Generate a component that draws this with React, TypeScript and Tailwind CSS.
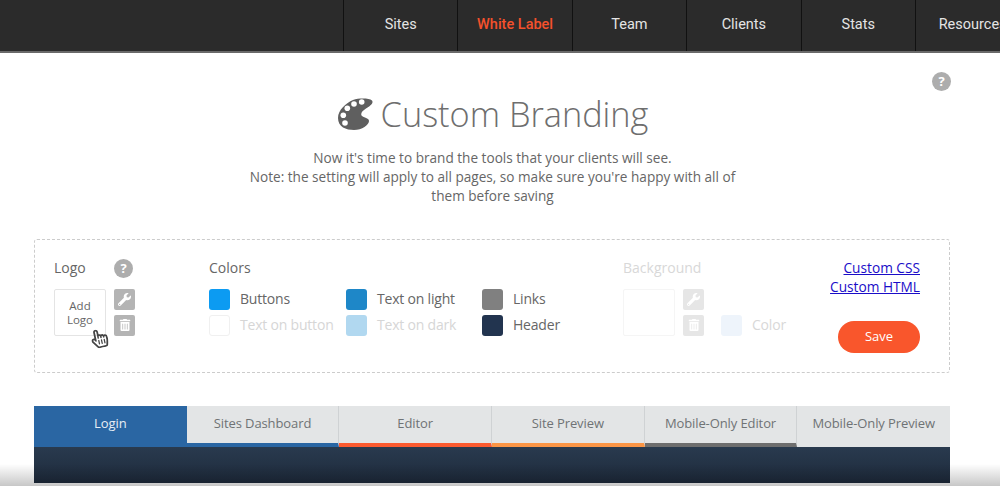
import { FaWrench, FaTrashAlt, FaRegHandPointer } from "react-icons/fa";

const body = "font-['Open_Sans',sans-serif]";

function Help({ className = "" }: { className?: string }) {
  return (
    <span className={`flex h-[19px] w-[19px] items-center justify-center rounded-full bg-[#adadad] text-[13px] font-bold leading-none text-white ${className}`}>?</span>
  );
}

function Tool({ children, faded }: { children: React.ReactNode; faded?: boolean }) {
  return (
    <span className={`flex h-[21px] w-[21px] items-center justify-center rounded-[2px] text-white ${faded ? "bg-[#e6e6e6]" : "bg-[#b4b4b4]"}`}>{children}</span>
  );
}

function Swatch({ color, label, faded }: { color: string; label: string; faded?: boolean }) {
  return (
    <div className="flex h-[21px] items-center gap-[10px]">
      <span className={`h-[21px] w-[21px] shrink-0 rounded-[3px] ${color}`} />
      <span className={`text-[14px] leading-none tracking-[-0.2px] ${faded ? "text-[#d6d6d6]" : "text-[#666]"}`}>{label}</span>
    </div>
  );
}

function Palette() {
  return (
    <svg width="35" height="33" viewBox="0 0 35 33" className="shrink-0">
      <path
        fill="#5f5f5f"
        d="M15 2C21 0 31 0 34 2.5C36 5 32 8 28 10.5C24 13 22 16 24 18C27 20 31 20 31 23C31 27 24 32 16 32C8 32 0 29 0 20C0 12 8 5 15 2Z"
      />
      <circle cx="23.7" cy="4" r="2.8" fill="#fff" />
      <circle cx="16" cy="6" r="2.8" fill="#fff" />
      <circle cx="9.3" cy="10.3" r="2.8" fill="#fff" />
      <circle cx="5.3" cy="17.3" r="2.8" fill="#fff" />
      <circle cx="7" cy="25" r="2.8" fill="#fff" />
    </svg>
  );
}

const nav = ["Sites", "White Label", "Team", "Clients", "Stats", "Resources"];
const tabs = [
  { label: "Login", line: "border-[#2a66a3]", active: true },
  { label: "Sites Dashboard", line: "border-[#2a66a3]" },
  { label: "Editor", line: "border-[#fb5a2f]" },
  { label: "Site Preview", line: "border-[#fb9545]" },
  { label: "Mobile-Only Editor", line: "border-[#6e6e6e]" },
  { label: "Mobile-Only Preview", line: "border-[#e3e5e6]", last: true },
];

export default function App() {
  return (
    <div className={`relative h-[486px] w-[1000px] overflow-hidden bg-white ${body}`}>
      <header className="flex h-[53px] overflow-hidden border-b-2 border-[#6a6a6a] bg-[#2b2b2b] pl-[343px] font-['Roboto',sans-serif] text-[14.5px]">
        {nav.map((n) => (
          <div key={n} className={`flex h-full w-[114.4px] shrink-0 items-center justify-center whitespace-nowrap border-l border-[#111] pb-[1px] ${n === "White Label" ? "font-medium text-[#f4512c]" : "text-[#e4e4e4]"}`}>
            {n}
          </div>
        ))}
      </header>

      <Help className="absolute left-[932px] top-[72px]" />

      <section className="flex flex-col items-center pr-[14px] pt-[36px]">
        <h1 className="flex h-[50px] items-center gap-[8px] text-[#6e6e6e]">
          <Palette />
          <span className="font-['Open_Sans',sans-serif] text-[34.3px] font-light leading-none">Custom Branding</span>
        </h1>
        <p className="mr-[1px] mt-[9px] w-[520px] text-center text-[13.6px] leading-[19.2px] text-[#666]">
          Now it's time to brand the tools that your clients will see.
          <br />
          Note: the setting will apply to all pages, so make sure you're happy with all of them before saving
        </p>
      </section>

      <section className="mx-[34px] mt-[33px] flex h-[134px] w-[916px] rounded-[3px] border border-dashed border-[#ccc] pl-[19px] pr-[29px] pt-[19px]">
        <div className="w-[155px]">
          <div className="flex h-[19px] items-center">
            <span className="w-[60px] text-[14px] leading-none text-[#666]">Logo</span>
            <Help />
          </div>
          <div className="relative mt-[11px] flex gap-[8px]">
            <div className="flex h-[47px] w-[52px] items-center justify-center rounded-[2px] border border-[#e4e4e4] pt-[1px] text-center text-[11.5px] leading-[14px] text-[#666]">
              Add<br />Logo
            </div>
            <div className="flex flex-col gap-[5px]">
              <Tool><FaWrench size={13} /></Tool>
              <Tool><FaTrashAlt size={12} /></Tool>
            </div>
            <FaRegHandPointer className="absolute left-[37px] top-[40px] h-[19px] w-[17px] rotate-[-12deg] text-[#444]" />
          </div>
        </div>

        <div className="w-[414px]">
          <div className="flex h-[19px] items-center text-[14px] leading-none text-[#666]">Colors</div>
          <div className="mt-[11px] flex">
            <div className="flex w-[137px] flex-col gap-[5px]">
              <Swatch color="bg-[#0c9bf2]" label="Buttons" />
              <Swatch color="border border-[#f0f0f0] bg-white" label="Text on button" faded />
            </div>
            <div className="flex w-[136px] flex-col gap-[5px]">
              <Swatch color="bg-[#1e87c8]" label="Text on light" />
              <Swatch color="bg-[#b1d8f0]" label="Text on dark" faded />
            </div>
            <div className="flex flex-col gap-[5px]">
              <Swatch color="bg-[#808080]" label="Links" />
              <Swatch color="bg-[#22344f]" label="Header" />
            </div>
          </div>
        </div>

        <div className="w-[200px]">
          <div className="flex h-[19px] items-center text-[14px] leading-none text-[#d8d8d8]">Background</div>
          <div className="mt-[11px] flex gap-[8px]">
            <div className="h-[47px] w-[52px] rounded-[2px] border border-[#f5f5f5]" />
            <div className="flex flex-col gap-[5px]">
              <Tool faded><FaWrench size={13} /></Tool>
              <Tool faded><FaTrashAlt size={12} /></Tool>
            </div>
            <div className="ml-[9px] mt-[26px] flex h-[21px] items-center gap-[10px]">
              <span className="h-[21px] w-[21px] rounded-[3px] bg-[#eef4fb]" />
              <span className="text-[14px] leading-none tracking-[-0.2px] text-[#d8d8d8]">Color</span>
            </div>
          </div>
        </div>

        <div className="-mt-[1px] flex flex-1 flex-col items-end">
          <a href="#" className="whitespace-nowrap text-[13.7px] leading-[19px] text-[#1a0dc8] underline">Custom CSS</a>
          <a href="#" className="whitespace-nowrap text-[13.7px] leading-[19px] text-[#1a0dc8] underline">Custom HTML</a>
          <button className="mt-[25px] h-[32px] w-[82px] rounded-full bg-[#f9562c] text-[13px] text-white">Save</button>
        </div>
      </section>

      <nav className="mx-[34px] mt-[33px] grid w-[916px] grid-cols-6">
        {tabs.map((t) => (
          <div key={t.label} className={`flex h-[41px] items-center justify-center border-b-[4px] text-[13px] tracking-[-0.1px] ${t.line} ${t.active ? "bg-[#2a66a3] text-[#e8eef5]" : t.last ? "bg-[#e3e5e6] text-[#6f7375]" : "border-r border-r-[#cfd2d4] bg-[#e3e5e6] text-[#6f7375]"}`}>
            {t.label}
          </div>
        ))}
      </nav>
      <div className="mx-[34px] h-[36px] w-[916px] bg-gradient-to-b from-[#293a4e] to-[#1e2b3c]" />

      <div className="pointer-events-none absolute inset-x-0 bottom-0 h-[22px] bg-gradient-to-b from-transparent to-[#00000038]" />
    </div>
  );
}
